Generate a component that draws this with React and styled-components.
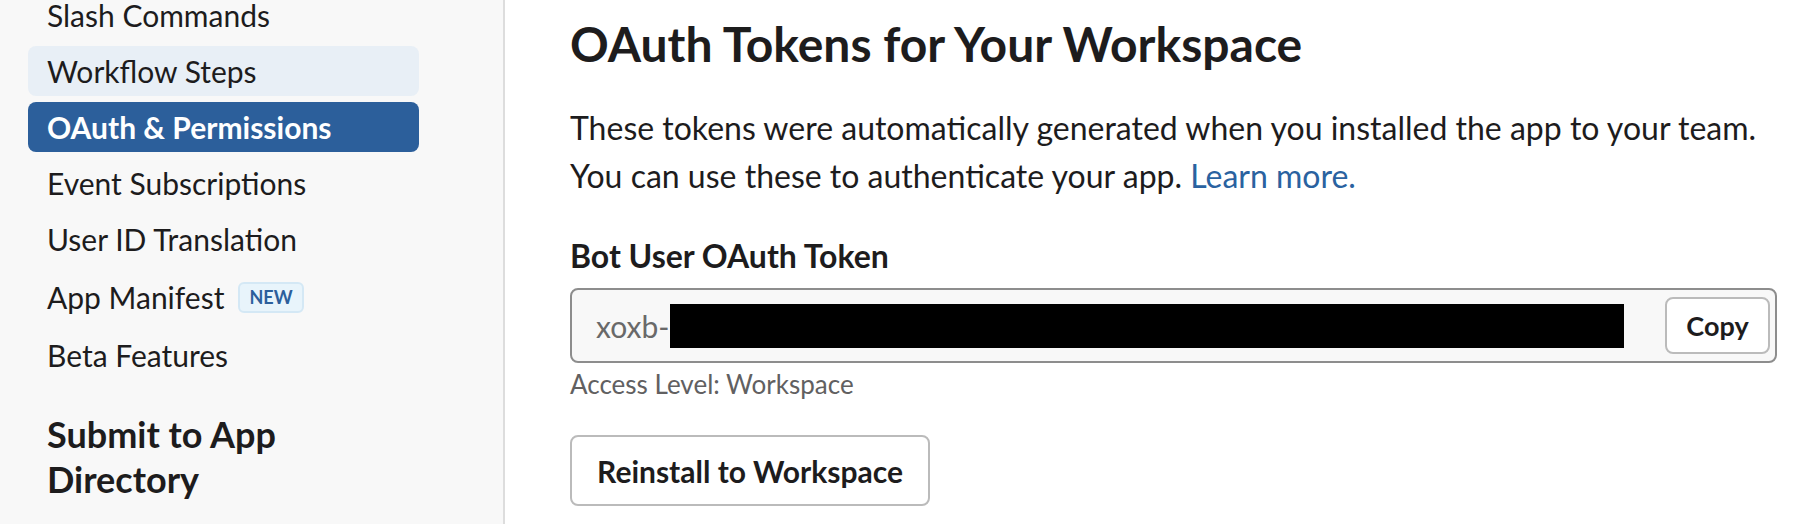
import React from 'react';
import styled, { createGlobalStyle } from 'styled-components';

const GlobalStyle = createGlobalStyle`
  body {
    margin: 0;
    font-family: Lato, "Open Sans", sans-serif;
    color: #1d1c1d;
    background: #fff;
  }
`;

const navItems = [
  { label: 'Slash Commands' },
  { label: 'Workflow Steps', state: 'hover' },
  { label: 'OAuth & Permissions', state: 'active' },
  { label: 'Event Subscriptions' },
  { label: 'User ID Translation' },
  { label: 'App Manifest', badge: 'NEW' },
  { label: 'Beta Features' },
];

const App = () => (
  <Page>
    <GlobalStyle />
    <Sidebar>
      <NavList>
        {navItems.map(item => (
          <NavItem key={item.label} state={item.state} tall={!!item.badge}>
            {item.label}
            {item.badge && <Badge>{item.badge}</Badge>}
          </NavItem>
        ))}
      </NavList>
      <SectionTitle>Submit to App Directory</SectionTitle>
    </Sidebar>

    <Main>
      <Heading>OAuth Tokens for Your Workspace</Heading>
      <Intro>
        These tokens were automatically generated when you installed the app to your team.
        <br />
        You can use these to authenticate your app. <Link href="#">Learn more.</Link>
      </Intro>

      <FieldLabel>Bot User OAuth Token</FieldLabel>
      <TokenBox>
        <TokenText>
          xoxb-
          <Redacted />
        </TokenText>
        <CopyButton>Copy</CopyButton>
      </TokenBox>
      <Hint>Access Level: Workspace</Hint>

      <Button>Reinstall to Workspace</Button>
    </Main>
  </Page>
);

const Page = styled.div`
  display: flex;
  height: 524px;
  overflow: hidden;
`;

const Sidebar = styled.nav`
  flex-shrink: 0;
  box-sizing: content-box;
  width: 391px;
  padding: 0 84px 0 28px;
  background: #f8f8f8;
  border-right: 2px solid #dddddd;
`;

const NavList = styled.div`
  display: flex;
  flex-direction: column;
  gap: 6px;
  margin-top: -10px;
`;

const NavItem = styled.div`
  display: flex;
  align-items: center;
  gap: 14px;
  height: ${props => props.tall ? '54px' : '50px'};
  padding: 0 19px;
  border-radius: 8px;
  font-size: 30px;
  white-space: nowrap;
  background: ${props =>
    props.state === 'active' ? '#2c5f9b' : props.state === 'hover' ? '#e8eff6' : 'transparent'};
  color: ${props => props.state === 'active' ? '#ffffff' : '#1d1c1d'};
  font-weight: ${props => props.state === 'active' ? 700 : 400};
`;

const Badge = styled.span`
  display: inline-flex;
  align-items: center;
  height: 27px;
  padding: 0 9px;
  border: 2px solid #d4e8f5;
  border-radius: 6px;
  background: #e8f4fb;
  color: #2c5f9b;
  font-size: 18px;
  font-weight: 700;
`;

const SectionTitle = styled.h3`
  width: 320px;
  margin: 32px 0 0 19px;
  font-size: 36px;
  line-height: 45px;
  font-weight: 700;
`;

const Main = styled.main`
  flex: 1;
  padding: 16px 0 0 65px;
`;

const Heading = styled.h1`
  margin: 0;
  font-size: 48px;
  line-height: 56px;
  font-weight: 700;
`;

const Intro = styled.p`
  margin: 32px 0 0;
  font-size: 32px;
  line-height: 48px;
`;

const Link = styled.a`
  color: #2a62a0;
  text-decoration: none;
`;

const FieldLabel = styled.h4`
  margin: 37px 0 0;
  font-size: 32px;
  line-height: 38px;
  font-weight: 700;
`;

const TokenBox = styled.div`
  display: flex;
  align-items: center;
  justify-content: space-between;
  box-sizing: border-box;
  width: 1207px;
  height: 75px;
  margin-top: 13px;
  padding: 0 5px 0 24px;
  border: 2px solid #8d8d8d;
  border-radius: 8px;
  background: #f8f8f8;
`;

const TokenText = styled.div`
  display: flex;
  align-items: center;
  font-size: 30px;
  color: #696969;
`;

const Redacted = styled.span`
  display: inline-block;
  width: 954px;
  height: 44px;
  background: #000;
`;

const CopyButton = styled.button`
  box-sizing: border-box;
  width: 105px;
  height: 57px;
  border: 2px solid #bbbbbb;
  border-radius: 8px;
  background: #fff;
  font-family: inherit;
  font-size: 27px;
  font-weight: 700;
  color: #1d1c1d;
`;

const Hint = styled.div`
  margin-top: 5px;
  font-size: 26px;
  line-height: 32px;
  color: #616061;
`;

const Button = styled.button`
  display: block;
  box-sizing: border-box;
  width: 360px;
  height: 71px;
  margin-top: 35px;
  border: 2px solid #bbbbbb;
  border-radius: 8px;
  background: #fff;
  font-family: inherit;
  font-size: 30px;
  font-weight: 700;
  color: #1d1c1d;
`;

export default App;
